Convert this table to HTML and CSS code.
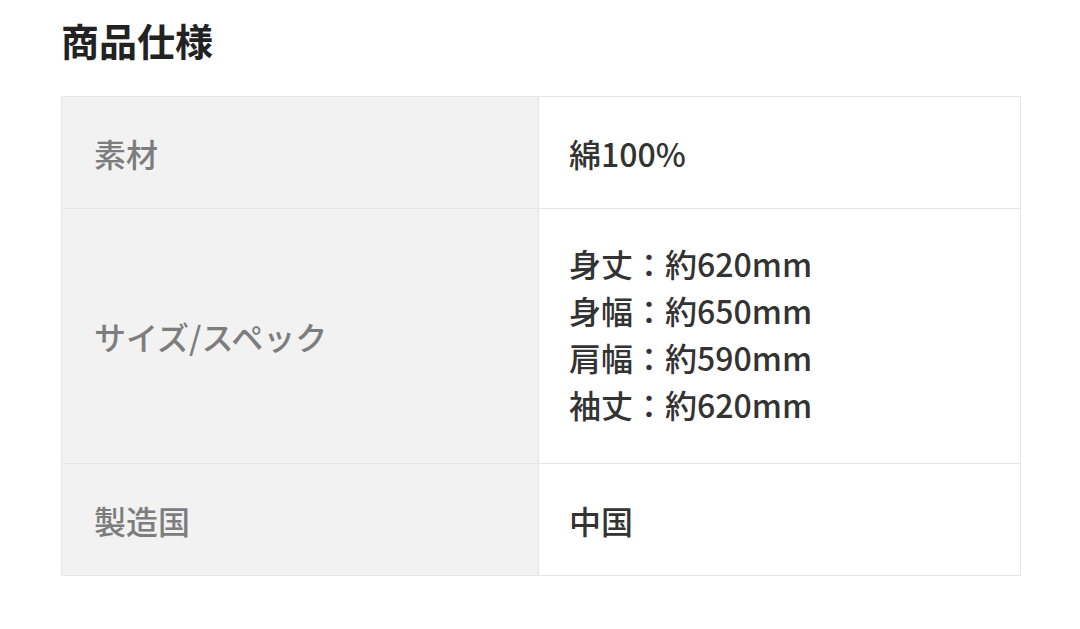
FILE: index.html
```html
<!DOCTYPE html>
<html lang="ja">
<head>
<meta charset="utf-8">
<link rel="stylesheet" href="styles.css">
</head>
<body>
<div class="page">
  <h2 class="title">商品仕様</h2>
  <div class="spec">
    <div class="row">
      <div class="label">素材</div>
      <div class="value">綿100%</div>
    </div>
    <div class="row">
      <div class="label">サイズ/スペック</div>
      <div class="value lines">
        <div>身丈：約620mm</div>
        <div>身幅：約650mm</div>
        <div>肩幅：約590mm</div>
        <div>袖丈：約620mm</div>
      </div>
    </div>
    <div class="row">
      <div class="label">製造国</div>
      <div class="value">中国</div>
    </div>
  </div>
</div>
</body>
</html>
```
FILE: styles.css
```css
html, body {
  margin: 0;
  padding: 0;
  background: #ffffff;
}
body {
  font-family: "Noto Sans CJK JP", "Noto Sans", sans-serif;
  color: #333333;
}
.page {
  padding: 14px 0 0 61px;
  width: 960px;
}
.title {
  margin: 0 0 30px 0;
  font-size: 38px;
  line-height: 52px;
  font-weight: 700;
  color: #222222;
  letter-spacing: 0;
}
.spec {
  border: 1px solid #e6e6e6;
  width: 958px;
}
.row {
  display: grid;
  grid-template-columns: 477px 1fr;
  border-top: 1px solid #e6e6e6;
}
.row:first-child {
  border-top: none;
}
.label {
  background: #f2f2f2;
  color: #7d7d7d;
  font-size: 32px;
  font-weight: 500;
  padding: 0 0 0 32px;
  display: flex;
  align-items: center;
  min-height: 111px;
  border-right: 1px solid #e6e6e6;
}
.value {
  background: #ffffff;
  color: #333333;
  font-size: 32px;
  font-weight: 500;
  padding: 0 0 0 30px;
  display: flex;
  align-items: center;
  min-height: 111px;
}
.value.lines {
  flex-direction: column;
  align-items: flex-start;
  justify-content: center;
  padding-top: 31px;
  padding-bottom: 35px;
  line-height: 47px;
}
```
